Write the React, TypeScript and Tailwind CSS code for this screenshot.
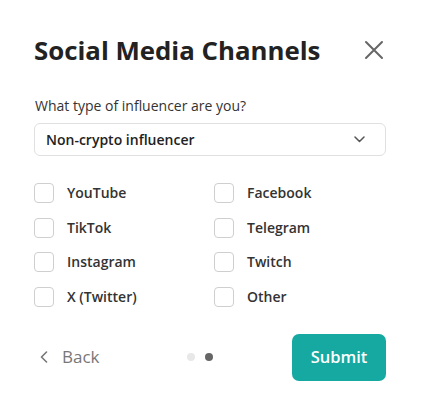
import React from "react";

const channels = [
  ["YouTube", "Facebook"],
  ["TikTok", "Telegram"],
  ["Instagram", "Twitch"],
  ["X (Twitter)", "Other"],
];

function Box({ label }: { label: string }) {
  return (
    <label className="flex items-center gap-[13px] h-[20px]">
      <span className="w-[20px] h-[20px] rounded-[4px] border border-[#cfcfcf] bg-white shrink-0" />
      <span className="text-[14px] font-semibold text-[#333] leading-[20px]">{label}</span>
    </label>
  );
}

export default function App() {
  return (
    <div
      className="w-[421px] h-[406px] bg-white pl-[34px] pr-[35px] pt-[34px]"
      style={{ fontFamily: '"Open Sans", sans-serif' }}
    >
      <div className="flex items-center justify-between h-[32px]">
        <h1 className="text-[25.8px] font-bold text-[#222] leading-[32px]">Social Media Channels</h1>
        <svg width="20" height="20" viewBox="0 0 20 20" className="mr-[2px]">
          <path d="M2 2 L18 18 M18 2 L2 18" stroke="#666" strokeWidth="2" strokeLinecap="round" />
        </svg>
      </div>
      <div className="mt-[30px] text-[14px] text-[#333] leading-[20px] pl-[1px]">
        What type of influencer are you?
      </div>
      <div className="mt-[7px] h-[33px] rounded-[6px] border border-[#e0e0e0] flex items-center justify-between pl-[11px] pr-[20px]">
        <span className="text-[14px] font-semibold text-[#222]">Non-crypto influencer</span>
        <svg width="11" height="7" viewBox="0 0 11 7">
          <path d="M1 1 L5.5 5.5 L10 1" stroke="#555" strokeWidth="1.5" fill="none" strokeLinecap="round" strokeLinejoin="round" />
        </svg>
      </div>
      <div className="mt-[27px] grid grid-cols-[180px_1fr] gap-y-[14.5px]">
        {channels.flat().map((c) => (
          <Box key={c} label={c} />
        ))}
      </div>
      <div className="mt-[27px] flex items-center justify-between">
        <div className="flex items-center gap-[14px] pl-[6px]">
          <svg width="8" height="12" viewBox="0 0 8 12">
            <path d="M6.5 1 L1.5 6 L6.5 11" stroke="#777" strokeWidth="1.6" fill="none" strokeLinecap="round" strokeLinejoin="round" />
          </svg>
          <span className="text-[17px] text-[#777] font-medium">Back</span>
        </div>
        <div className="flex items-center gap-[10px] ml-[8px]">
          <span className="w-[8px] h-[8px] rounded-full bg-[#e8e8e8]" />
          <span className="w-[8px] h-[8px] rounded-full bg-[#666]" />
        </div>
        <button className="w-[94px] h-[47px] rounded-[7px] bg-[#15a9a1] text-white text-[16.5px] font-semibold">
          Submit
        </button>
      </div>
    </div>
  );
}
